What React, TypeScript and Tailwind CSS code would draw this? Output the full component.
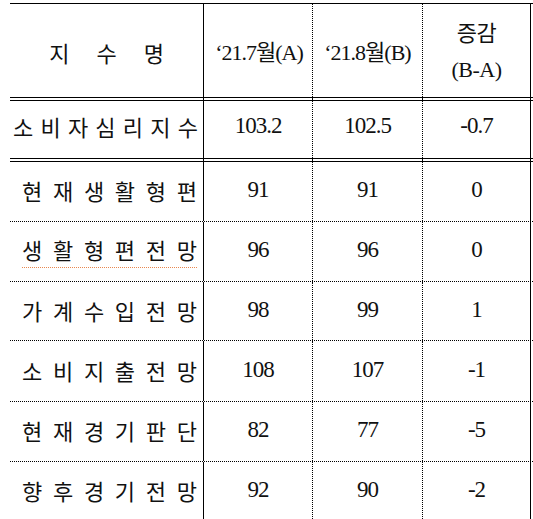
import React from "react";

// ── Data ────────────────────────────────────────────────────────────────
const ROWS = [
  { label: "현재생활형편", a: "91", b: "91", d: "0", h: "h-[61px]", top: true, squiggle: false },
  { label: "생활형편전망", a: "96", b: "96", d: "0", h: "h-[60px]", top: false, squiggle: true },
  { label: "가계수입전망", a: "98", b: "99", d: "1", h: "h-[59px]", top: false, squiggle: false },
  { label: "소비지출전망", a: "108", b: "107", d: "-1", h: "h-[61px]", top: false, squiggle: false },
  { label: "현재경기판단", a: "82", b: "77", d: "-5", h: "h-[60px]", top: false, squiggle: false },
  { label: "향후경기전망", a: "92", b: "90", d: "-2", h: "h-[60px]", top: false, squiggle: false },
];

const GRID = "grid grid-cols-[194px_109px_110px_108px]";
const KO = "font-['Noto_Sans_CJK_KR',sans-serif]";
const NUM = "font-['Liberation_Serif','Noto_Sans_CJK_KR',serif] text-[23px] tracking-[-1px]";

// cell borders: solid after col 1, dotted after col 2/3, solid at right edge
const C1 = "border-r border-black";
const C2 = "border-r border-dotted border-black";
const C4 = "border-r border-black";

function Spacer() {
  return (
    <div className={`${GRID} h-[2px]`}>
      <div className={C1} />
      <div className={C2} />
      <div className={C2} />
      <div className={C4} />
    </div>
  );
}

function Spread({ text, className = "" }: { text: string; className?: string }) {
  return (
    <div className={`flex justify-between ${className}`}>
      {text.split("").map((ch, i) => (
        <span key={i}>{ch}</span>
      ))}
    </div>
  );
}

export default function App() {
  return (
    <div className="w-[533px] h-[519px] overflow-hidden bg-white text-[#111] pl-[10px] pt-[3px]">
      {/* Header */}
      <div className={`${GRID} h-[95px] border-y border-black`}>
        <div className={`${C1} flex items-center justify-center pt-[4px]`}>
          <div className={`${KO} text-[22px] flex gap-[27px]`}>
            <span>지</span>
            <span>수</span>
            <span>명</span>
          </div>
        </div>
        <div className={`${C2} flex items-center justify-center pt-[4px] pl-[2px]`}>
          <span className="font-['Liberation_Serif','Noto_Sans_CJK_KR',serif] text-[22px] tracking-[-1px] whitespace-nowrap">
            ‘21.7월(A)
          </span>
        </div>
        <div className={`${C2} flex items-center justify-center pt-[4px]`}>
          <span className="font-['Liberation_Serif','Noto_Sans_CJK_KR',serif] text-[22px] tracking-[-1px] whitespace-nowrap">
            ‘21.8월(B)
          </span>
        </div>
        <div className={`${C4} flex flex-col items-center justify-center pt-[2px] font-['Liberation_Serif','Noto_Sans_CJK_KR',serif] text-[22px] leading-[36px] tracking-[-0.5px]`}>
          <span>증감</span>
          <span>(B-A)</span>
        </div>
      </div>

      <Spacer />

      {/* 소비자심리지수 */}
      <div className={`${GRID} h-[59px] border-y border-black`}>
        <div className={`${C1} flex items-center pl-[3px] pr-[5px] pb-[6px]`}>
          <Spread text="소비자심리지수" className={`${KO} text-[22px] w-full`} />
        </div>
        <div className={`${C2} flex items-center justify-center pb-[6px] ${NUM}`}>103.2</div>
        <div className={`${C2} flex items-center justify-center pb-[6px] ${NUM}`}>102.5</div>
        <div className={`${C4} flex items-center justify-center pb-[6px] ${NUM}`}>-0.7</div>
      </div>

      <Spacer />

      {ROWS.map((r) => (
        <div
          key={r.label}
          className={`${GRID} ${r.h} border-b border-dotted border-black ${r.top ? "border-t border-t-black" : ""}`}
          style={r.top ? { borderTopStyle: "solid" } : undefined}
        >
          <div className={`${C1} flex items-center pl-[12px] pr-[6px] pb-[2px]`}>
            <div className={`w-full ${r.squiggle ? "border-b border-dotted border-[#e8874f] pb-[1px]" : ""}`}>
              <Spread text={r.label} className={`${KO} text-[22px]`} />
            </div>
          </div>
          <div className={`${C2} flex items-center justify-center pb-[2px] ${NUM}`}>{r.a}</div>
          <div className={`${C2} flex items-center justify-center pb-[2px] ${NUM}`}>{r.b}</div>
          <div className={`${C4} flex items-center justify-center pb-[2px] ${NUM}`}>{r.d}</div>
        </div>
      ))}
    </div>
  );
}
